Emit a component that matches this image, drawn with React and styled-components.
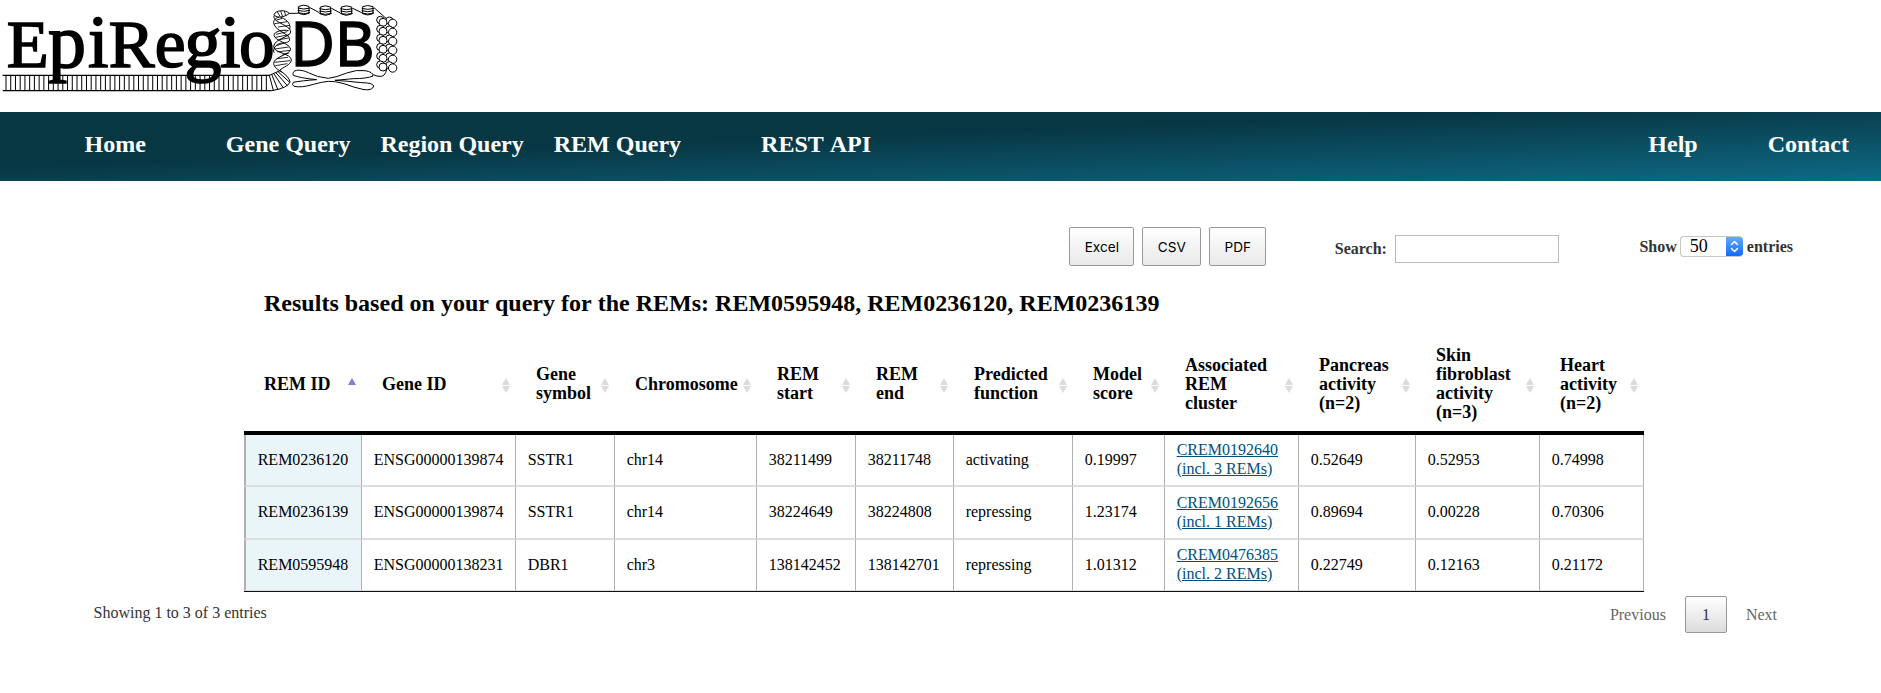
import React from "react";
import styled, { createGlobalStyle } from "styled-components";

const serif = '"Liberation Serif", "Times New Roman", serif';

const GlobalStyle = createGlobalStyle`
  * { box-sizing: border-box; }
  body { margin: 0; background: #fff; color: #000; font-family: ${serif}; font-size: 16px; }
`;

const Page = styled.div`
  min-height: 693px;
  overflow: hidden;
`;

const Header = styled.header`
  height: 112px;
`;

const LogoImage = styled.svg`
  display: block;
  width: 410px;
  height: 100px;
  fill: none;
  stroke: #000;
  stroke-width: 3;
`;

const LogoText = styled.text`
  fill: #000;
  stroke: #000;
  stroke-width: ${(p) => p.$weight};
  font-family: ${(p) => (p.$sans ? '"Noto Sans", sans-serif' : serif)};
  font-size: ${(p) => p.$size}px;
`;

const Nav = styled.nav`
  display: flex;
  align-items: center;
  height: 69px;
  padding: 0 32px 5px 84.5px;
  background: linear-gradient(to bottom right, #083744 40%, #0e6a85);
`;

const NavLink = styled.a`
  color: #fff;
  font-size: 24px;
  line-height: 28px;
  font-weight: bold;
  font-kerning: none;
  white-space: nowrap;
  margin-left: ${(p) => (p.$push ? "auto" : `${p.$gap || 0}px`)};
`;

const Toolbar = styled.div`
  display: flex;
  justify-content: flex-end;
  align-items: flex-start;
  padding: 46px 88px 0 0;
  height: 98px;
`;

const Buttons = styled.div`
  display: flex;
  gap: 8px;
  margin-right: 68.5px;
`;

const ExportButton = styled.button`
  width: ${(p) => p.$width}px;
  height: 39px;
  padding: 0;
  border: 1px solid #999;
  border-radius: 2px;
  background: linear-gradient(to bottom, #fff 0%, #e9e9e9 100%);
  color: #000;
  font: 13.6px Inter, sans-serif;
`;

const SearchLabel = styled.label`
  display: flex;
  align-items: center;
  gap: 8.5px;
  margin: 8px 80px 0 0;
  font-weight: bold;
  color: #333;
`;

const SearchInput = styled.input`
  width: 164px;
  height: 28px;
  border: 1px solid #bbb;
  background: #fff;
`;

const LengthLabel = styled.label`
  display: flex;
  align-items: center;
  height: 21px;
  margin-top: 9px;
  font-weight: bold;
  color: #333;
  line-height: 18px;
`;

const LengthSelect = styled.span`
  display: flex;
  justify-content: space-between;
  width: 63px;
  height: 21px;
  margin: 0 4px 0 3px;
  padding-left: 9px;
  overflow: hidden;
  border: 1px solid #c6c6c6;
  border-right: 0;
  border-radius: 4px;
  font-weight: normal;
  font-size: 18px;
  line-height: 18px;
  color: #000;
`;

const Stepper = styled.span`
  display: flex;
  align-items: center;
  justify-content: center;
  width: 17px;
  height: 21px;
  margin-top: -1px;
  background: linear-gradient(#6eaafa, #0a68ff);
`;

const Title = styled.h2`
  margin: 10px 0 0 264px;
  font-size: 24px;
  line-height: 28px;
  font-weight: bold;
  font-kerning: none;
  letter-spacing: 0.01px;
`;

const Table = styled.table`
  width: 1400px;
  margin: 20px 0 0 244px;
  table-layout: fixed;
  border-collapse: separate;
  border-spacing: 0;
  border-bottom: 1px solid #111;
`;

const HeadCell = styled.th`
  height: 98px;
  padding: 0 6px 0 20px;
  border-bottom: 4px solid #000;
  text-align: left;
  font-size: 18px;
  line-height: 19px;
  white-space: nowrap;
`;

const HeadContent = styled.div`
  display: flex;
  align-items: center;
  justify-content: space-between;
`;

const HeadLine = styled.div``;

const SortIcon = styled.svg`
  display: block;
  flex: none;
  width: 8px;
  height: 15px;
  margin-top: 3px;
`;

const Cell = styled.td`
  height: ${(p) => p.$height}px;
  padding: 0 0 2px 11.7px;
  border-right: 1px solid #b0b0b0;
  border-bottom: ${(p) => (p.$last ? 1 : 2)}px solid #ddd;
  line-height: 19px;
  white-space: nowrap;
  &:first-child {
    border-left: 2px solid #b0b0b0;
    background: #eaf5fa;
  }
`;

const ClusterLink = styled.a`
  color: #004f7c;
  text-decoration: underline;
`;

const Footer = styled.footer`
  display: flex;
  align-items: center;
  justify-content: space-between;
  padding: 4px 104px 0 93.5px;
  color: #333;
`;

const Info = styled.div`
  margin-top: -3px;
`;

const Pager = styled.div`
  display: flex;
  align-items: center;
  gap: 19px;
  color: #666;
`;

const PageButton = styled.button`
  width: 42px;
  height: 37px;
  border: 1px solid #979797;
  border-radius: 2px;
  background: linear-gradient(to bottom, #fff 0%, #dcdcdc 100%);
  color: #333;
  font: 16px ${serif};
`;

const rungs = Array.from({ length: 56 }, (_, i) => 18 + i * 14.2);
const barrels = [[893, 16], [958, 18], [1021, 18], [1085, 17]];
const beadRows = [68, 95, 122, 149, 176, 202];

function Logo() {
  return (
    <LogoImage viewBox="0 0 1230 300" role="img" aria-label="EpiRegioDB">
      <path strokeWidth="3.6" d="M8 226H810M8 272H815" />
      <path strokeWidth="3" d={rungs.filter((x) => x < 806).map((x) => `M${x} 226V272`).join("")} />
      <path d="M808 226L840 212Q868 230 870 246Q864 264 815 272M808 226L820 271M815 223L834 270M820 219L850 264M826 216L862 257M833 214L869 247" />
      <path d="M868 40C855 28 828 30 822 44C826 54 852 54 868 40M824 45C810 66 872 74 872 96C870 112 822 116 821 140C823 160 874 160 874 180C872 196 850 200 838 212M836 52C826 54 818 62 822 72C828 90 848 94 866 110C876 128 858 128 842 130C826 134 818 146 822 158M868 88C874 78 866 60 842 52M866 92C850 88 822 94 822 106C824 122 870 130 872 148C870 164 822 170 821 190C822 202 832 208 846 216" />
      <path strokeWidth="2.5" d="M832 36L840 49M842 33L848 50M853 33L857 47M828 61L846 55M824 71L862 65M834 81L870 76M828 103L862 95M826 112L868 104M838 119L866 114M830 137L852 129M824 147L866 141M832 156L870 151M848 163L866 160M830 176L864 172M824 187L870 182M826 197L862 191" />
      <path d="M868 40H893M930 23L958 38M995 25L1021 39M1058 25L1085 38M1122 23L1158 55" />
      {barrels.map(([x, y]) => (
        <g key={x} transform={`translate(${x} ${y})`}>
          <path d="M3 3Q18 -4 34 3V24Q18 32 3 24ZM0 8Q18 14 37 8M0 15Q18 21 37 15M0 22Q18 28 37 22" />
        </g>
      ))}
      {beadRows.map((y) => (
        <g key={y} fill="#fff">
          <circle cx="1141" cy={y - 8} r="11" />
          <circle cx="1168" cy={y - 6} r="11" />
          <circle cx="1149" cy={y - 1} r="12" />
          <circle cx="1178" cy={y + 2} r="12.5" />
        </g>
      ))}
      <path d="M1160 207Q1156 232 1137 229Q1128 228 1120 224" />
      <path d="M880 218C882 208 905 208 925 218Q950 232 985 235Q1010 232 1040 219Q1070 208 1095 212Q1120 216 1119 228Q1100 236 1060 236L1005 241Q1040 243 1085 248Q1118 248 1121 258Q1118 272 1092 269Q1060 262 1032 251Q1005 243 985 244Q965 246 940 253Q905 264 882 259Q874 254 880 247Q905 242 950 239Q900 234 880 226Q877 221 880 218Z" />
      <LogoText $size={206} $weight={5} y="200">
        <tspan x="20">E</tspan>
        <tspan x="144" fontSize="228">p</tspan>
        <tspan x="264" fontSize="222">i</tspan>
        <tspan x="326">R</tspan>
        <tspan x="464" fontSize="208">e</tspan>
        <tspan x="553" fontSize="224">g</tspan>
        <tspan x="660" fontSize="222">i</tspan>
        <tspan x="717" fontSize="214">o</tspan>
      </LogoText>
      <LogoText $sans $size={184} $weight={4} y="199" x="871 1004">DB</LogoText>
    </LogoImage>
  );
}

function Sort({ active }) {
  return (
    <SortIcon viewBox="0 0 8 15">
      <path fill={active ? "#7d7ddc" : "#dcdcdc"} d="M4 0L8 7H0Z" />
      {!active && <path fill="#dcdcdc" d="M0 8H8L4 15Z" />}
    </SortIcon>
  );
}

const columns = [
  [118, "REM ID"],
  [154, "Gene ID"],
  [99, "Gene", "symbol"],
  [142, "Chromosome"],
  [99, "REM", "start"],
  [98, "REM", "end"],
  [119, "Predicted", "function"],
  [92, "Model", "score"],
  [134, "Associated", "REM", "cluster"],
  [117, "Pancreas", "activity", "(n=2)"],
  [124, "Skin", "fibroblast", "activity", "(n=3)"],
  [104, "Heart", "activity", "(n=2)"],
];

const rows = [
  ["REM0236120", "ENSG00000139874", "SSTR1", "chr14", "38211499", "38211748", "activating", "0.19997", ["CREM0192640", "(incl. 3 REMs)"], "0.52649", "0.52953", "0.74998"],
  ["REM0236139", "ENSG00000139874", "SSTR1", "chr14", "38224649", "38224808", "repressing", "1.23174", ["CREM0192656", "(incl. 1 REMs)"], "0.89694", "0.00228", "0.70306"],
  ["REM0595948", "ENSG00000138231", "DBR1", "chr3", "138142452", "138142701", "repressing", "1.01312", ["CREM0476385", "(incl. 2 REMs)"], "0.22749", "0.12163", "0.21172"],
];
const rowHeights = [52, 53, 51];

export default function App() {
  return (
    <Page>
      <GlobalStyle />
      <Header>
        <Logo />
      </Header>
      <Nav>
        <NavLink>Home</NavLink>
        <NavLink $gap={80}>Gene Query</NavLink>
        <NavLink $gap={30}>Region Query</NavLink>
        <NavLink $gap={30}>REM Query</NavLink>
        <NavLink $gap={80}>REST API</NavLink>
        <NavLink $push>Help</NavLink>
        <NavLink $gap={70}>Contact</NavLink>
      </Nav>
      <Toolbar>
        <Buttons>
          <ExportButton $width={65}>Excel</ExportButton>
          <ExportButton $width={59}>CSV</ExportButton>
          <ExportButton $width={57}>PDF</ExportButton>
        </Buttons>
        <SearchLabel>
          Search:
          <SearchInput />
        </SearchLabel>
        <LengthLabel>
          Show
          <LengthSelect>
            50
            <Stepper>
              <svg width="9" height="13" viewBox="0 0 9 13" fill="none" stroke="#fff" strokeWidth="1.5" strokeLinecap="round" strokeLinejoin="round">
                <path d="M1.5 4.5L4.5 1.5L7.5 4.5M1.5 8.5L4.5 11.5L7.5 8.5" />
              </svg>
            </Stepper>
          </LengthSelect>
          entries
        </LengthLabel>
      </Toolbar>
      <Title>Results based on your query for the REMs: REM0595948, REM0236120, REM0236139</Title>
      <Table>
        <colgroup>
          {columns.map(([width], i) => (
            <col key={i} width={width} />
          ))}
        </colgroup>
        <thead>
          <tr>
            {columns.map(([, ...lines], i) => (
              <HeadCell key={i}>
                <HeadContent>
                  <div>
                    {lines.map((line) => (
                      <HeadLine key={line}>{line}</HeadLine>
                    ))}
                  </div>
                  <Sort active={i === 0} />
                </HeadContent>
              </HeadCell>
            ))}
          </tr>
        </thead>
        <tbody>
          {rows.map((row, r) => (
            <tr key={row[0]}>
              {row.map((value, i) => (
                <Cell key={i} $height={rowHeights[r]} $last={r === rows.length - 1}>
                  {Array.isArray(value) ? (
                    <ClusterLink>
                      {value[0]}
                      <br />
                      {value[1]}
                    </ClusterLink>
                  ) : (
                    value
                  )}
                </Cell>
              ))}
            </tr>
          ))}
        </tbody>
      </Table>
      <Footer>
        <Info>Showing 1 to 3 of 3 entries</Info>
        <Pager>
          <span>Previous</span>
          <PageButton>1</PageButton>
          <span>Next</span>
        </Pager>
      </Footer>
    </Page>
  );
}
